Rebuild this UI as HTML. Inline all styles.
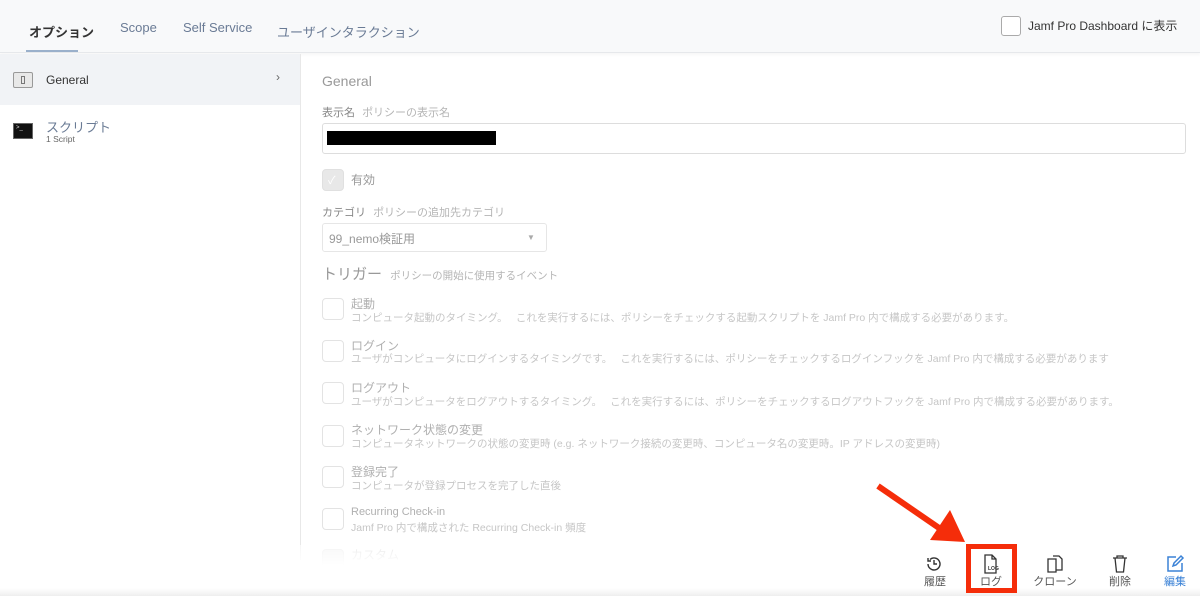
<!DOCTYPE html>
<html><head><meta charset="utf-8"><style>
*{box-sizing:border-box;margin:0;padding:0}
body{width:1200px;height:596px;overflow:hidden;background:#fff;font-family:"Liberation Sans","Noto Sans CJK JP",sans-serif;position:relative;color:#333}
.top{position:absolute;left:0;top:0;width:1200px;height:53px;background:#f8f9fa;border-bottom:1px solid #e6e8eb;box-shadow:0 2px 3px rgba(0,0,0,.04)}
.tab{position:absolute;font-size:13px;color:#6a7b95}
.side{position:absolute;left:0;top:54px;width:301px;height:506px;border-right:1px solid #e8e8e8;background:#fff}
.g{height:51px;background:#f1f3f6;position:relative}
.abs{position:absolute}
.lt{color:#b5b5b5}
.cb{position:absolute;width:22px;height:22px;border:1px solid #e3e3e3;border-radius:4px;background:#fff}
.tt{position:absolute;left:351px;font-size:12px;color:#b0b0b0}
.td{position:absolute;left:351px;font-size:10.5px;color:#c6c6c6;white-space:nowrap}
.bb{position:absolute;left:0;top:545px;width:1200px;height:51px;background:linear-gradient(rgba(255,255,255,0.6) 0%,#fff 40%,#fff 85%,#eee)}
.bl{position:absolute;font-size:11px;color:#555;text-align:center;width:60px}
</style></head><body>
<div class="top">
<div class="tab" style="left:29px;top:22px;color:#333;font-weight:bold">オプション</div>
<div class="abs" style="left:26px;top:50px;width:52px;height:2px;background:#9ab0cb"></div>
<div class="tab" style="left:120px;top:20px">Scope</div>
<div class="tab" style="left:183px;top:20px">Self Service</div>
<div class="tab" style="left:277px;top:22px">ユーザインタラクション</div>
<div class="abs" style="left:1001px;top:16px;width:20px;height:20px;border:1px solid #aaa;border-radius:3px;background:#fff"></div>
<div class="abs" style="left:1028px;top:17px;font-size:12px;color:#333">Jamf Pro Dashboard に表示</div>
</div>
<div class="side">
<div class="g">
<div class="abs" style="left:13px;top:18px;width:20px;height:16px;border:1px solid #999;background:#e8e8e8;border-radius:2px"><div style="position:absolute;left:7px;top:3px;width:4px;height:8px;border:1px solid #777"></div></div>
<div class="abs" style="left:46px;top:19px;font-size:12px;color:#333">General</div>
<div class="abs" style="left:276px;top:16px;font-size:12px;color:#666">›</div>
</div>
<div class="abs" style="left:13px;top:69px;width:20px;height:16px;background:#111;border:1px solid #666"><span style="color:#ddd;font-size:6px;position:absolute;left:2px;top:1px">&gt;_</span></div>
<div class="abs" style="left:46px;top:63px;font-size:13px;color:#6a7b95">スクリプト</div>
<div class="abs" style="left:46px;top:80px;font-size:8.5px;color:#666">1 Script</div>
</div>
<div class="abs" style="left:322px;top:73px;font-size:14px;color:#999">General</div>
<div class="abs" style="left:322px;top:104px;font-size:11px;color:#888">表示名 <span class="lt" style="margin-left:4px">ポリシーの表示名</span></div>
<div class="abs" style="left:322px;top:123px;width:864px;height:31px;border:1px solid #ddd;border-radius:3px"></div>
<div class="abs" style="left:327px;top:131px;width:169px;height:14px;background:#000"></div>
<div class="cb" style="left:322px;top:169px;background:#e8e8e8;border-color:#e0e0e0"><span style="position:absolute;left:5px;top:2px;color:#fff;font-size:11px">✓</span></div>
<div class="abs" style="left:351px;top:171px;font-size:12px;color:#999">有効</div>
<div class="abs" style="left:322px;top:204px;font-size:11px;color:#888">カテゴリ <span class="lt" style="margin-left:4px">ポリシーの追加先カテゴリ</span></div>
<div class="abs" style="left:322px;top:223px;width:225px;height:29px;border:1px solid #e6e6e6;border-radius:3px"></div>
<div class="abs" style="left:329px;top:230px;font-size:12px;color:#999">99_nemo検証用</div>
<div class="abs" style="left:527px;top:233px;font-size:8px;color:#aaa">▼</div>
<div class="abs" style="left:322px;top:263px;font-size:15px;color:#999">トリガー <span class="lt" style="font-size:10.5px;margin-left:4px">ポリシーの開始に使用するイベント</span></div>
<div class="cb" style="left:322px;top:298px"></div><div class="tt" style="top:295px">起動</div><div class="td" style="top:310px">コンピュータ起動のタイミング。　 これを実行するには、ポリシーをチェックする起動スクリプトを Jamf Pro 内で構成する必要があります。</div>
<div class="cb" style="left:322px;top:340px"></div><div class="tt" style="top:337px">ログイン</div><div class="td" style="top:351px">ユーザがコンピュータにログインするタイミングです。　 これを実行するには、ポリシーをチェックするログインフックを Jamf Pro 内で構成する必要があります</div>
<div class="cb" style="left:322px;top:382px"></div><div class="tt" style="top:379px">ログアウト</div><div class="td" style="top:394px">ユーザがコンピュータをログアウトするタイミング。　 これを実行するには、ポリシーをチェックするログアウトフックを Jamf Pro 内で構成する必要があります。</div>
<div class="cb" style="left:322px;top:425px"></div><div class="tt" style="top:421px">ネットワーク状態の変更</div><div class="td" style="top:436px">コンピュータネットワークの状態の変更時 (e.g. ネットワーク接続の変更時、コンピュータ名の変更時。IP アドレスの変更時)</div>
<div class="cb" style="left:322px;top:466px"></div><div class="tt" style="top:463px">登録完了</div><div class="td" style="top:478px">コンピュータが登録プロセスを完了した直後</div>
<div class="cb" style="left:322px;top:508px"></div><div class="tt" style="top:506px;font-size:11px">Recurring Check-in</div><div class="td" style="top:520px">Jamf Pro 内で構成された Recurring Check-in 頻度</div>
<div class="cb" style="left:322px;top:549px;background:#eee"></div><div class="tt" style="top:546px;color:#ccc">カスタム</div>
<div class="bb">
<svg class="abs" style="left:925px;top:10px" width="18" height="18" viewBox="0 0 18 18" fill="none" stroke="#333" stroke-width="1.4"><path d="M3 9a6 6 0 1 0 2-4.5M3 3v3h3M9 5v4h3"/></svg>
<div class="bl" style="left:905px;top:28px">履歴</div>
<svg class="abs" style="left:982px;top:9px" width="18" height="20" viewBox="0 0 18 20" fill="none" stroke="#333" stroke-width="1.3"><path d="M3 1h7l4 4v14H3zM10 1v4h4"/><text x="6" y="16" font-size="5" font-weight="bold" fill="#333" stroke="none">LOG</text></svg>
<div class="bl" style="left:961px;top:28px">ログ</div>
<svg class="abs" style="left:1046px;top:9px" width="18" height="20" viewBox="0 0 18 20" fill="none" stroke="#333" stroke-width="1.3"><path d="M2 5h8v13H2zM7 2h6l3 3v11h-6"/></svg>
<div class="bl" style="left:1025px;top:28px">クローン</div>
<svg class="abs" style="left:1112px;top:9px" width="16" height="20" viewBox="0 0 16 20" fill="none" stroke="#333" stroke-width="1.3"><path d="M1 4h14M5 4V2h6v2M3 4l1.5 14h7L13 4"/></svg>
<div class="bl" style="left:1090px;top:28px">削除</div>
<svg class="abs" style="left:1166px;top:9px" width="19" height="19" viewBox="0 0 19 19" fill="none" stroke="#3b82d6" stroke-width="1.5"><path d="M10 3H2v14h14V9M7 12l1-3 7-7 2 2-7 7z"/></svg>
<div class="bl" style="left:1145px;top:28px;color:#3b82d6">編集</div>
</div>
<div class="abs" style="left:966px;top:544px;width:51px;height:49px;border:5px solid #f52d0a"></div>
<svg class="abs" style="left:870px;top:478px" width="100" height="70" viewBox="0 0 100 70"><path d="M8 8L72 52" stroke="#f52d0a" stroke-width="6"/><path d="M60 62L95 64L80 32Z" fill="#f52d0a"/></svg>
</body></html>
